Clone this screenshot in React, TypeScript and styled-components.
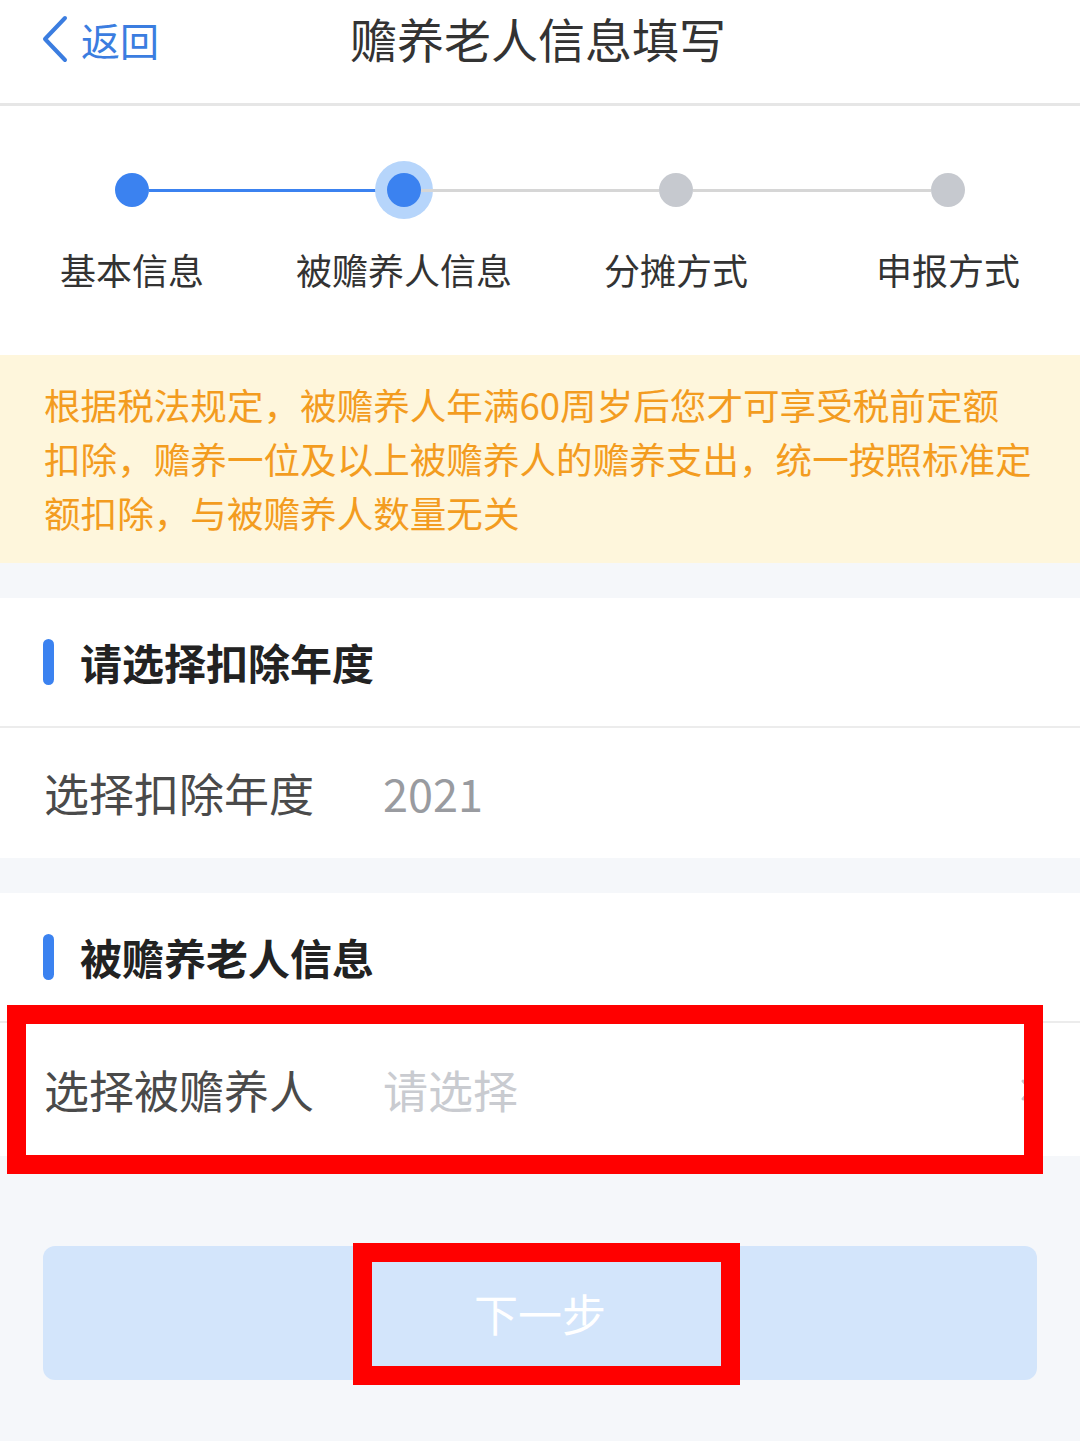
import styled, { createGlobalStyle } from "styled-components";

const GlobalStyle = createGlobalStyle`
  * { box-sizing: border-box; }
  html, body {
    margin: 0;
    padding: 0;
    background: #f5f7fa;
  }
  body {
    font-family: "Noto Sans CJK SC", "Noto Sans", sans-serif;
  }
`;

const Page = styled.div`
  width: 1080px;
  min-height: 1441px;
  background: #f5f7fa;
  overflow: hidden;
`;

const NavBar = styled.header`
  height: 106px;
  padding: 0 41px;
  background: #fff;
  border-bottom: 3px solid #e6e6e6;
  display: grid;
  grid-template-columns: 1fr auto 1fr;
  align-items: start;
`;

const BackButton = styled.button`
  height: 78px;
  padding: 0;
  border: none;
  background: none;
  display: flex;
  align-items: center;
  gap: 13px;
  color: #3b7de0;
  font-family: inherit;
  font-size: 39px;
  justify-self: start;
`;

const NavTitle = styled.h1`
  margin: 0 0 0 -4px;
  font-size: 47px;
  line-height: 76px;
  font-weight: 400;
  color: #333;
`;

// 步骤条
const Steps = styled.section`
  background: #fff;
  padding: 67px 0 66px;
`;

const StepGrid = styled.div`
  width: 1088px;
  margin-left: -4px;
  display: grid;
  grid-template-columns: repeat(4, 1fr);
`;

const Step = styled.div`
  display: flex;
  flex-direction: column;
`;

const Track = styled.div`
  height: 34px;
  display: flex;
  align-items: center;
`;

type RailState = "done" | "todo" | "none";

const Rail = styled.span<{ $state: RailState }>`
  flex: 1;
  height: 3px;
  background: ${(p) =>
    p.$state === "done" ? "#3b82f0" : p.$state === "todo" ? "#d6d6d6" : "transparent"};
`;

const Dot = styled.span<{ $state: "done" | "current" | "todo" }>`
  width: 34px;
  height: 34px;
  border-radius: 50%;
  flex-shrink: 0;
  background: ${(p) => (p.$state === "todo" ? "#c6c9cf" : "#3b82f0")};
  box-shadow: ${(p) => (p.$state === "current" ? "0 0 0 12px #b6d5fb" : "none")};
`;

const StepLabel = styled.div`
  margin-top: 42px;
  text-align: center;
  font-size: 36px;
  line-height: 40px;
  color: #333;
  white-space: nowrap;
`;

const Notice = styled.div`
  padding: 23px 44px;
  background: #fef6dc;
  color: #f39c1f;
  font-size: 36.6px;
  line-height: 54px;
`;

const NoticeLine = styled.span`
  display: block;
  white-space: nowrap;
`;

const Card = styled.section`
  margin-top: 35px;
  background: #fff;
`;

const CardHead = styled.div`
  height: 128px;
  padding-left: 43px;
  display: flex;
  align-items: center;
  gap: 26px;
`;

const Bar = styled.span`
  width: 11px;
  height: 46px;
  border-radius: 6px;
  background: #3b82f0;
`;

const CardTitle = styled.h2`
  margin: 0;
  font-size: 42px;
  line-height: 50px;
  font-weight: 700;
  color: #222;
`;

const Row = styled.div<{ $height: number }>`
  position: relative;
  height: ${(p) => p.$height}px;
  padding: 0 46px 0 44px;
  border-top: 2px solid #ececec;
  display: flex;
  align-items: center;
`;

const RowLabel = styled.span`
  width: 339px;
  font-size: 45px;
  line-height: 56px;
  color: #4a4a4a;
`;

const RowValue = styled.span<{ $placeholder?: boolean }>`
  flex: 1;
  font-size: 45px;
  line-height: 56px;
  color: ${(p) => (p.$placeholder ? "#c9cbd0" : "#999ba0")};
`;

const Footer = styled.div`
  padding: 90px 43px 0;
`;

const NextButton = styled.button`
  position: relative;
  width: 100%;
  height: 134px;
  border: none;
  border-radius: 12px;
  background: #d3e5fb;
  color: #fff;
  font-family: inherit;
  font-size: 44px;
`;

// 红色标注框
const Mark = styled.span<{ $inset: string; $width?: number }>`
  position: absolute;
  inset: ${(p) => p.$inset};
  width: ${(p) => (p.$width ? `${p.$width}px` : "auto")};
  border: 19px solid #ff0000;
  pointer-events: none;
`;

const steps = ["基本信息", "被赡养人信息", "分摊方式", "申报方式"];
const current = 1;

function BackArrow() {
  return (
    <svg width="27" height="48" viewBox="0 0 27 48" fill="none">
      <path d="M24 3 L4 24 L24 45" stroke="#3b7de0" strokeWidth="4" strokeLinecap="round" strokeLinejoin="round" />
    </svg>
  );
}

function Chevron() {
  return (
    <svg width="14" height="24" viewBox="0 0 14 24" fill="none">
      <path d="M3 3 L11 12 L3 21" stroke="#c4c6cb" strokeWidth="3" strokeLinecap="round" strokeLinejoin="round" />
    </svg>
  );
}

export default function App() {
  return (
    <Page>
      <GlobalStyle />
      <NavBar>
        <BackButton>
          <BackArrow />
          返回
        </BackButton>
        <NavTitle>赡养老人信息填写</NavTitle>
      </NavBar>

      <Steps>
        <StepGrid>
          {steps.map((name, i) => (
            <Step key={name}>
              <Track>
                <Rail $state={i === 0 ? "none" : i <= current ? "done" : "todo"} />
                <Dot $state={i < current ? "done" : i === current ? "current" : "todo"} />
                <Rail $state={i === steps.length - 1 ? "none" : i < current ? "done" : "todo"} />
              </Track>
              <StepLabel>{name}</StepLabel>
            </Step>
          ))}
        </StepGrid>
      </Steps>

      <Notice>
        <NoticeLine>根据税法规定，被赡养人年满60周岁后您才可享受税前定额</NoticeLine>
        <NoticeLine>扣除，赡养一位及以上被赡养人的赡养支出，统一按照标准定</NoticeLine>
        <NoticeLine>额扣除，与被赡养人数量无关</NoticeLine>
      </Notice>

      <Card>
        <CardHead>
          <Bar />
          <CardTitle>请选择扣除年度</CardTitle>
        </CardHead>
        <Row $height={132}>
          <RowLabel>选择扣除年度</RowLabel>
          <RowValue>2021</RowValue>
        </Row>
      </Card>

      <Card>
        <CardHead>
          <Bar />
          <CardTitle>被赡养老人信息</CardTitle>
        </CardHead>
        <Row $height={135}>
          <RowLabel>选择被赡养人</RowLabel>
          <RowValue $placeholder>请选择</RowValue>
          <Chevron />
          <Mark $inset="-18px 37px -18px 7px" />
        </Row>
      </Card>

      <Footer>
        <NextButton>
          下一步
          <Mark $inset="-3px auto -5px 310px" $width={387} />
        </NextButton>
      </Footer>
    </Page>
  );
}
